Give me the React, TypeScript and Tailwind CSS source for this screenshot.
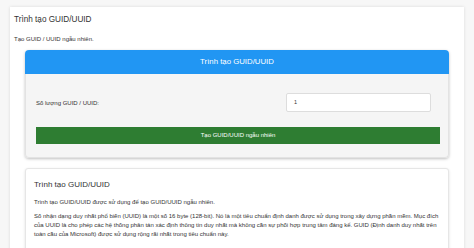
import React from "react";

const App = () => {
  return (
    <div
      className="h-[248px] overflow-y-scroll bg-[#f7f7f7] text-[#333] [font-family:'Liberation_Sans',Arial,sans-serif] [&::-webkit-scrollbar]:w-[6px] [&::-webkit-scrollbar-track]:bg-[#f1f1f1] [&::-webkit-scrollbar-thumb]:bg-[#c1c1c1] [&::-webkit-scrollbar-button:single-button]:block [&::-webkit-scrollbar-button:single-button]:h-[7px] [&::-webkit-scrollbar-button:single-button]:bg-[#f1f1f1]"
    >
      <div className="pt-[7px] pb-[7px] pl-[10px] pr-[10px]">
        <div className="bg-white shadow-[0_0_3px_rgba(0,0,0,0.12)] px-[4px] pt-[7px] pb-[12px]">
          <h1 className="text-[8.2px] leading-[12px] font-normal">
            Trình tạo GUID/UUID
          </h1>
          <p className="mt-[9px] text-[6px] leading-[8px]">
            Tạo GUID / UUID ngẫu nhiên.
          </p>

          <div className="mt-[7px] mx-[11px] rounded-[4px] shadow-[0_1px_3px_rgba(0,0,0,0.25)]">
            <div className="h-[24px] flex items-center justify-center rounded-t-[4px] bg-[#2196f3] text-white text-[7.8px]">
              Trình tạo GUID/UUID
            </div>
            <div className="bg-[#f5f5f5] rounded-b-[4px] border border-t-0 border-[#e3e3e3] pt-[19px] pb-[13px] pl-[10px] pr-[8px]">
              <div className="flex items-center justify-between pr-[9px]">
                <label className="text-[6px] leading-[8px]">
                  Số lượng GUID / UUID:
                </label>
                <div className="w-[145px] h-[19px] bg-white border border-[#ddd] rounded-[2px] flex items-center pl-[7px] text-[5.5px]">
                  1
                </div>
              </div>
              <button className="mt-[15px] w-full h-[17px] bg-[#2e7d32] text-white text-[6px] flex items-center justify-center">
                Tạo GUID/UUID ngẫu nhiên
              </button>
            </div>
          </div>

          <div className="mt-[10px] mx-[11px] bg-white border border-[#e6e6e6] rounded-[3px] shadow-[0_1px_3px_rgba(0,0,0,0.12)] pl-[8px] pr-[4px] pt-[10px] pb-[14px]">
            <h2 className="text-[8px] leading-[12px] font-normal">
              Trình tạo GUID/UUID
            </h2>
            <p className="mt-[7px] text-[6px] leading-[9px]">
              Trình tạo GUID/UUID được sử dụng để tạo GUID/UUID ngẫu nhiên.
            </p>
            <p className="mt-[5px] text-[6px] leading-[9px]">
              Số nhận dạng duy nhất phổ biến (UUID) là một số 16 byte (128-bit).
              Nó là một tiêu chuẩn định danh được sử dụng trong xây dựng phần
              mềm. Mục đích của UUID là cho phép các hệ thống phân tán xác định
              thông tin duy nhất mà không cần sự phối hợp trung tâm đáng kể.
              GUID (Định danh duy nhất trên toàn cầu của Microsoft) được sử dụng
              rộng rãi nhất trong tiêu chuẩn này.
            </p>
            <h3 className="mt-[12px] text-[7px] leading-[10px] font-normal">
              Định dạng GUID/UUID
            </h3>
            <p className="mt-[5px] text-[6px] leading-[9px]">
              UUID được biểu diễn bằng 32 chữ số thập lục phân, hiển thị thành
              5 nhóm được phân tách bằng dấu gạch nối theo dạng 8-4-4-4-12, tổng
              cộng 36 ký tự (32 ký tự chữ số và 4 dấu gạch nối).
            </p>
            <p className="mt-[5px] text-[6px] leading-[9px]">
              Ví dụ: 123e4567-e89b-12d3-a456-426614174000
            </p>
            <p className="mt-[5px] text-[6px] leading-[9px]">
              Xác suất để hai UUID được tạo ngẫu nhiên trùng nhau là gần như
              bằng không, vì vậy chúng có thể được sử dụng làm khóa duy nhất
              trong cơ sở dữ liệu và hệ thống phân tán.
            </p>
          </div>
        </div>
      </div>
    </div>
  );
};

export default App;
